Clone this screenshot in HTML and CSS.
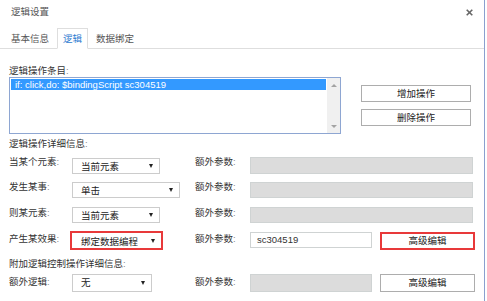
FILE: index.html
```html
<!DOCTYPE html>
<html lang="zh">
<head>
<meta charset="utf-8">
<title>逻辑设置</title>
<link rel="stylesheet" href="styles.css">
</head>
<body>
<div class="dialog">
  <header class="titlebar">
    <span class="title">逻辑设置</span>
    <svg class="close" width="7" height="7" viewBox="0 0 7 7"><path d="M0.7 0.7L6.3 6.3M6.3 0.7L0.7 6.3" stroke="#666" stroke-width="1.6"/></svg>
  </header>
  <nav class="tabs">
    <span class="tab">基本信息</span>
    <span class="tab active">逻辑</span>
    <span class="tab">数据绑定</span>
  </nav>
  <main class="content">
    <div class="section-label sec1">逻辑操作条目<span class="colon">:</span></div>
    <div class="list-row">
      <div class="listbox">
        <div class="items">
          <div class="item selected">if: click,do: $bindingScript sc304519</div>
        </div>
        <div class="scrollbar">
          <span class="arr up"></span>
          <span class="arr down"></span>
        </div>
      </div>
      <div class="list-actions">
        <button class="btn">增加操作</button>
        <button class="btn">删除操作</button>
      </div>
    </div>

    <div class="section-label sec2">逻辑操作详细信息<span class="colon">:</span></div>

    <div class="row r1">
      <div class="lbl mt6">当某个元素<span class="colon">:</span></div>
      <div class="ctl-col"><div class="select w88 mt8"><span>当前元素</span><i class="caret"></i></div></div>
      <div class="lbl2 mt6">额外参数<span class="colon">:</span></div>
      <div class="input gray wide h17 mt7"></div>
    </div>

    <div class="row r2">
      <div class="lbl mt5">发生某事<span class="colon">:</span></div>
      <div class="ctl-col"><div class="select w108 mt6"><span>单击</span><i class="caret"></i></div></div>
      <div class="lbl2 mt5">额外参数<span class="colon">:</span></div>
      <div class="input gray wide mt6"></div>
    </div>

    <div class="row r3">
      <div class="lbl mt2">则某元素<span class="colon">:</span></div>
      <div class="ctl-col"><div class="select w88 mt2"><span>当前元素</span><i class="caret"></i></div></div>
      <div class="lbl2 mt2">额外参数<span class="colon">:</span></div>
      <div class="input gray wide mt2"></div>
    </div>

    <div class="row r4">
      <div class="lbl mt2">产生某效果<span class="colon">:</span></div>
      <div class="ctl-col"><div class="select hl w93"><span>绑定数据编程</span><i class="caret"></i></div></div>
      <div class="lbl2 mt2">额外参数<span class="colon">:</span></div>
      <div class="input narrow mt1">sc304519</div>
      <button class="btn adv hl-btn mt1">高级编辑</button>
    </div>

    <div class="section-label sec3">附加逻辑控制操作详细信息<span class="colon">:</span></div>

    <div class="row r6">
      <div class="lbl mt2">额外逻辑<span class="colon">:</span></div>
      <div class="ctl-col"><div class="select w80 h18"><span>无</span><i class="caret"></i></div></div>
      <div class="lbl2 mt2">额外参数<span class="colon">:</span></div>
      <div class="input gray narrow h18"></div>
      <button class="btn adv h18">高级编辑</button>
    </div>
  </main>
</div>
</body>
</html>
```

FILE: styles.css
```css
* { box-sizing: border-box; margin: 0; padding: 0; }

body {
  width: 487px;
  height: 301px;
  overflow: hidden;
  background: #fff;
  font-family: "Liberation Sans", "Noto Sans CJK SC", sans-serif;
  font-size: 9.5px;
  color: #333;
}

.dialog {
  width: 485px;
  height: 301px;
  border-right: 1px solid #8aa0cf;
}

.titlebar {
  display: flex;
  align-items: flex-start;
  height: 28px;
  padding: 0 11px 0 11px;
}
.title { line-height: 24px; color: #555; }
.close { margin-left: auto; margin-top: 9px; }

.tabs {
  display: flex;
  align-items: flex-end;
  height: 21px;
  border-bottom: 1px solid #dedede;
  padding-left: 5px;
  gap: 2px;
}
.tab {
  height: 21px;
  margin-bottom: -1px;
  padding: 0 5px;
  border: 1px solid transparent;
  line-height: 19px;
  color: #555;
}
.tab.active {
  border-color: #dedede;
  border-bottom-color: #fff;
  background: #fff;
  color: #2f7bd0;
}

.content { padding-left: 9px; }

.section-label { line-height: 12px; color: #333; }
.colon { color: #888; }
.sec1 { margin-top: 16px; }
.sec2 { margin-top: 4px; }
.sec3 { margin-top: 8px; }

.list-row { display: flex; align-items: flex-start; }
.listbox {
  display: flex;
  width: 332px;
  height: 57px;
  border: 1px solid #8ea6d2;
}
.items { flex: 1; padding: 1px 1px 0 1px; }
.item {
  height: 11px;
  line-height: 11px;
  padding-left: 4px;
  font-family: "Liberation Sans", sans-serif;
  white-space: nowrap;
}
.item.selected { background: #3399ff; color: #fff; }
.scrollbar {
  width: 13px;
  background: #f0f0f0;
  display: flex;
  flex-direction: column;
  justify-content: space-between;
  align-items: center;
  padding: 6px 0 5px;
}
.arr { width: 0; height: 0; border-left: 3px solid transparent; border-right: 3px solid transparent; }
.arr.up { border-bottom: 3px solid #a3a3a3; }
.arr.down { border-top: 3px solid #a3a3a3; }

.list-actions {
  display: flex;
  flex-direction: column;
  gap: 7px;
  margin-left: 20px;
  margin-top: 8px;
}
.btn {
  display: block;
  width: 110px;
  height: 17px;
  border: 1px solid #adadad;
  background: #fff;
  font: inherit;
  color: #222;
  line-height: 15px;
  text-align: center;
}

.row { display: flex; align-items: flex-start; }
.r1 { margin-top: 0; }
.r2 { margin-top: 2px; }
.r3 { margin-top: 7px; }
.r4 { margin-top: 8px; }
.r6 { margin-top: 4px; }

.lbl { width: 63px; line-height: 12px; }
.lbl2 { width: 55px; line-height: 12px; }
.ctl-col { width: 123px; }

.select {
  display: flex;
  align-items: center;
  justify-content: space-between;
  height: 16px;
  padding: 0 6px 0 8px;
  border: 1px solid #cccccc;
  background: #fff;
  color: #222;
}
.caret {
  width: 0; height: 0;
  border-left: 2.5px solid transparent;
  border-right: 2.5px solid transparent;
  border-top: 4px solid #222;
}
.w80 { width: 80px; }
.w88 { width: 88px; }
.w93 { width: 93px; }
.w108 { width: 108px; }
.select.hl {
  height: 19px;
  margin-left: -2px;
  border: 2px solid #e8393a;
  padding-left: 9px;
}

.input {
  height: 16px;
  border: 1px solid #cfd3d3;
  background: #fff;
  line-height: 14px;
  padding-left: 6px;
  color: #333;
  font-family: "Liberation Sans", sans-serif;
}
.input.gray { background: #dcdcdc; }
.wide { width: 223px; }
.narrow { width: 122px; }
.h17 { height: 17px; }
.h18 { height: 18px; line-height: 16px; }

.btn.adv { width: 95px; margin-left: 8px; }
.btn.hl-btn { height: 18px; border: 2px solid #e8393a; line-height: 14px; }

.mt1 { margin-top: 1px; }
.mt2 { margin-top: 2px; }
.mt5 { margin-top: 5px; }
.mt6 { margin-top: 6px; }
.mt7 { margin-top: 7px; }
.mt8 { margin-top: 8px; }
```
